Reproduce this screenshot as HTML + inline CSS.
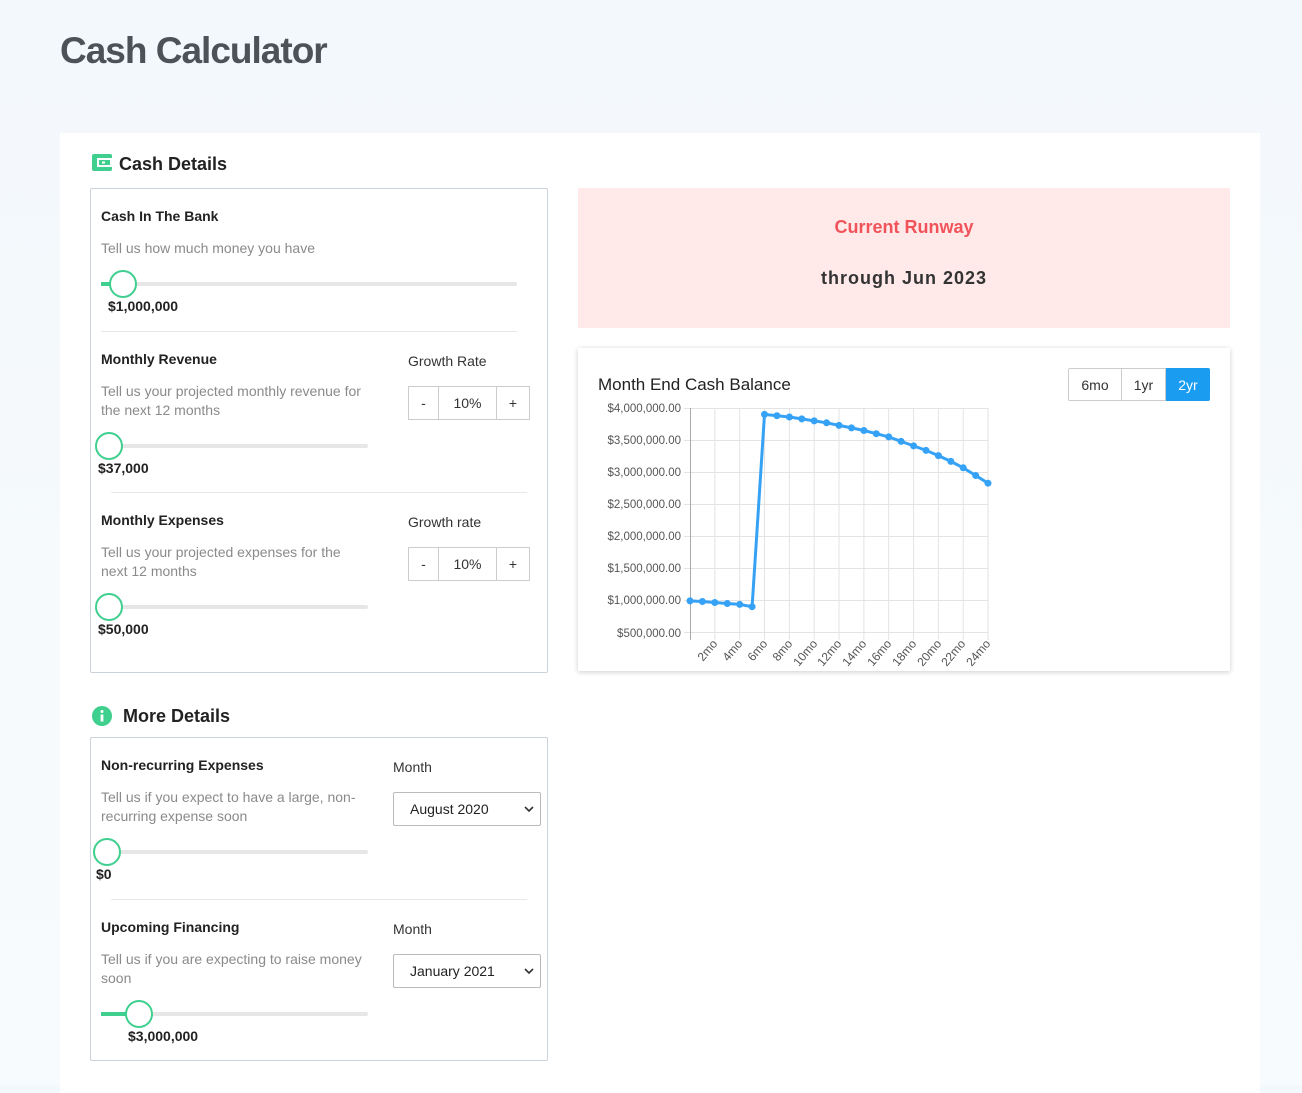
<!DOCTYPE html>
<html><head><meta charset="utf-8"><style>
*{box-sizing:border-box;margin:0;padding:0}
body{width:1302px;height:1085px;background:linear-gradient(180deg,#f3f8fc,#f8fbfd);font-family:"Liberation Sans",Arial,sans-serif;position:relative;overflow:hidden;color:#222}
.a{position:absolute}
h1{position:absolute;left:60px;top:30px;font-size:37px;font-weight:bold;color:#4b5358;letter-spacing:-1px}
.card{left:60px;top:133px;width:1200px;height:960px;background:#fff}
.box{border:1px solid #cbd2da;border-radius:2px;background:#fff}
.lbl{font-size:14px;font-weight:bold;color:#222}
.desc{font-size:14px;color:#8a8a8a;line-height:19px}
.val{font-size:14px;font-weight:bold;color:#222}
.track{height:4px;background:#e6e6e6;border-radius:2px}
.thumb{width:28px;height:28px;border-radius:50%;border:2px solid #3fcf8e;background:#fff}
.fill{height:4px;background:#3fcf8e}
.gr{font-size:14px;color:#333}
.stp{height:34px;display:flex}
.stp div{border:1px solid #ccc;display:flex;align-items:center;justify-content:center;font-size:14px;color:#333;background:#fff}
.sel{border:1px solid #bbb;border-radius:2px;font-size:14px;color:#222;padding:0 0 0 16px;display:flex;align-items:center;background:#fff}
.hr{height:1px;background:#e8e8e8}
</style></head><body>
<h1>Cash Calculator</h1>
<div class="a card"></div>
<svg class="a" style="left:92px;top:154px" width="20" height="17"><rect x="0" y="0" width="20" height="17" rx="2" fill="#3fcf8e"/><rect x="5" y="4" width="15" height="9" fill="#fff"/><rect x="7" y="6" width="11" height="5" fill="#3fcf8e"/><rect x="10" y="7.5" width="3" height="2" fill="#fff"/></svg>
<div class="a" style="left:119px;top:154px;font-size:18px;font-weight:bold;color:#222">Cash Details</div>

<div class="a box" style="left:90px;top:188px;width:458px;height:485px"></div>
<div class="a lbl" style="left:101px;top:208px">Cash In The Bank</div>
<div class="a desc" style="left:101px;top:239px">Tell us how much money you have</div>
<div class="a track" style="left:101px;top:282px;width:416px"></div>
<div class="a fill" style="left:101px;top:282px;width:12px"></div>
<div class="a thumb" style="left:109px;top:270px"></div>
<div class="a val" style="left:108px;top:298px">$1,000,000</div>
<div class="a hr" style="left:101px;top:331px;width:416px"></div>

<div class="a lbl" style="left:101px;top:351px">Monthly Revenue</div>
<div class="a gr" style="left:408px;top:353px">Growth Rate</div>
<div class="a desc" style="left:101px;top:382px">Tell us your projected monthly revenue for<br>the next 12 months</div>
<div class="a stp" style="left:408px;top:386px"><div style="width:31px">-</div><div style="width:59px;margin-left:-1px">10%</div><div style="width:34px;margin-left:-1px">+</div></div>
<div class="a track" style="left:101px;top:444px;width:267px"></div>
<div class="a thumb" style="left:95px;top:432px"></div>
<div class="a val" style="left:98px;top:460px">$37,000</div>
<div class="a hr" style="left:111px;top:492px;width:416px"></div>

<div class="a lbl" style="left:101px;top:512px">Monthly Expenses</div>
<div class="a gr" style="left:408px;top:514px">Growth rate</div>
<div class="a desc" style="left:101px;top:543px">Tell us your projected expenses for the<br>next 12 months</div>
<div class="a stp" style="left:408px;top:547px"><div style="width:31px">-</div><div style="width:59px;margin-left:-1px">10%</div><div style="width:34px;margin-left:-1px">+</div></div>
<div class="a track" style="left:101px;top:605px;width:267px"></div>
<div class="a thumb" style="left:95px;top:593px"></div>
<div class="a val" style="left:98px;top:621px">$50,000</div>

<svg class="a" style="left:92px;top:706px" width="20" height="20"><circle cx="10" cy="10" r="10" fill="#3fcf8e"/><circle cx="10" cy="5.5" r="1.5" fill="#fff"/><rect x="8.6" y="8.5" width="2.8" height="7" fill="#fff"/></svg>
<div class="a" style="left:123px;top:706px;font-size:18px;font-weight:bold;color:#222">More Details</div>

<div class="a box" style="left:90px;top:737px;width:458px;height:324px"></div>
<div class="a lbl" style="left:101px;top:757px">Non-recurring Expenses</div>
<div class="a gr" style="left:393px;top:759px">Month</div>
<div class="a desc" style="left:101px;top:788px">Tell us if you expect to have a large, non-<br>recurring expense soon</div>
<div class="a sel" style="left:393px;top:792px;width:148px;height:34px">August 2020<svg style="position:absolute;right:6px;top:13px" width="10" height="7"><path d="M1 1 L5 5 L9 1" fill="none" stroke="#333" stroke-width="1.6"/></svg></div>
<div class="a track" style="left:101px;top:850px;width:267px"></div>
<div class="a thumb" style="left:93px;top:838px"></div>
<div class="a val" style="left:96px;top:866px">$0</div>
<div class="a hr" style="left:111px;top:899px;width:416px"></div>

<div class="a lbl" style="left:101px;top:919px">Upcoming Financing</div>
<div class="a gr" style="left:393px;top:921px">Month</div>
<div class="a desc" style="left:101px;top:950px">Tell us if you are expecting to raise money<br>soon</div>
<div class="a sel" style="left:393px;top:954px;width:148px;height:34px">January 2021<svg style="position:absolute;right:6px;top:13px" width="10" height="7"><path d="M1 1 L5 5 L9 1" fill="none" stroke="#333" stroke-width="1.6"/></svg></div>
<div class="a track" style="left:101px;top:1012px;width:267px"></div>
<div class="a fill" style="left:101px;top:1012px;width:28px"></div>
<div class="a thumb" style="left:125px;top:1000px"></div>
<div class="a val" style="left:128px;top:1028px">$3,000,000</div>

<div class="a" style="left:578px;top:188px;width:652px;height:140px;background:#ffe9e9"></div>
<div class="a" style="left:578px;top:217px;width:652px;text-align:center;font-size:18px;font-weight:bold;color:#f0545a">Current Runway</div>
<div class="a" style="left:578px;top:268px;width:652px;text-align:center;font-size:18px;font-weight:bold;color:#333;letter-spacing:1px">through Jun 2023</div>

<div class="a" style="left:578px;top:348px;width:652px;height:323px;background:#fff;box-shadow:0 1px 5px rgba(0,0,0,.2)"></div>
<div class="a" style="left:598px;top:375px;font-size:17px;color:#222">Month End Cash Balance</div>
<div class="a" style="left:1068px;top:368px;display:flex;height:33px;font-size:14px">
<div style="width:54px;border:1px solid #ccc;border-radius:2px 0 0 2px;display:flex;align-items:center;justify-content:center;color:#333">6mo</div>
<div style="width:44px;border:1px solid #ccc;border-left:none;display:flex;align-items:center;justify-content:center;color:#333">1yr</div>
<div style="width:44px;background:#1a9cf0;border-radius:0 2px 2px 0;display:flex;align-items:center;justify-content:center;color:#fff">2yr</div>
</div>
<svg class="a" style="left:578px;top:395px" width="440" height="280" viewBox="578 395 440 280">
<g stroke="#e3e3e3" stroke-width="1">
<line x1="684" y1="408.5" x2="988" y2="408.5"/><line x1="684" y1="440.5" x2="988" y2="440.5"/><line x1="684" y1="472.5" x2="988" y2="472.5"/><line x1="684" y1="504.5" x2="988" y2="504.5"/><line x1="684" y1="536.5" x2="988" y2="536.5"/><line x1="684" y1="568.5" x2="988" y2="568.5"/><line x1="684" y1="600.5" x2="988" y2="600.5"/><line x1="684" y1="632.5" x2="988" y2="632.5"/>
<line x1="714.8" y1="408" x2="714.8" y2="640"/><line x1="739.7" y1="408" x2="739.7" y2="640"/><line x1="764.5" y1="408" x2="764.5" y2="640"/><line x1="789.4" y1="408" x2="789.4" y2="640"/><line x1="814.2" y1="408" x2="814.2" y2="640"/><line x1="839" y1="408" x2="839" y2="640"/><line x1="863.9" y1="408" x2="863.9" y2="640"/><line x1="888.7" y1="408" x2="888.7" y2="640"/><line x1="913.6" y1="408" x2="913.6" y2="640"/><line x1="938.4" y1="408" x2="938.4" y2="640"/><line x1="963.2" y1="408" x2="963.2" y2="640"/><line x1="988" y1="408" x2="988" y2="640"/>
</g>
<line x1="690.5" y1="408" x2="690.5" y2="640" stroke="#aaa"/>
<g font-size="11.5" fill="#555" text-anchor="end" font-family="Liberation Sans, Arial, sans-serif">
<text x="681" y="412">$4,000,000.00</text><text x="681" y="444">$3,500,000.00</text><text x="681" y="476">$3,000,000.00</text><text x="681" y="508">$2,500,000.00</text><text x="681" y="540">$2,000,000.00</text><text x="681" y="572">$1,500,000.00</text><text x="681" y="604">$1,000,000.00</text><text x="681" y="637">$500,000.00</text>
</g>
<g font-size="12" fill="#555" text-anchor="end" font-family="Liberation Sans, Arial, sans-serif">
<text transform="translate(718,644) rotate(-50)">2mo</text><text transform="translate(743,644) rotate(-50)">4mo</text><text transform="translate(768,644) rotate(-50)">6mo</text><text transform="translate(793,644) rotate(-50)">8mo</text><text transform="translate(818,644) rotate(-50)">10mo</text><text transform="translate(842,644) rotate(-50)">12mo</text><text transform="translate(867,644) rotate(-50)">14mo</text><text transform="translate(892,644) rotate(-50)">16mo</text><text transform="translate(917,644) rotate(-50)">18mo</text><text transform="translate(942,644) rotate(-50)">20mo</text><text transform="translate(966,644) rotate(-50)">22mo</text><text transform="translate(991,644) rotate(-50)">24mo</text>
</g>
<polyline fill="none" stroke="#36a2f5" stroke-width="3" points="690,600.9 702.4,601.5 714.8,602.5 727.3,603.5 739.7,604.4 752.1,606.7 764.5,414.4 776.9,415.7 789.4,417 801.8,418.9 814.2,420.9 826.6,422.8 839,425.4 851.5,427.9 863.9,430.5 876.3,433.7 888.7,436.9 901.1,441.4 913.6,445.9 926,450.4 938.4,455.6 950.8,461.4 963.2,467.8 975.7,475.5 988,483.2"/>
<g fill="#36a2f5">
<circle cx="690" cy="600.9" r="3.5"/><circle cx="702.4" cy="601.5" r="3.5"/><circle cx="714.8" cy="602.5" r="3.5"/><circle cx="727.3" cy="603.5" r="3.5"/><circle cx="739.7" cy="604.4" r="3.5"/><circle cx="752.1" cy="606.7" r="3.5"/><circle cx="764.5" cy="414.4" r="3.5"/><circle cx="776.9" cy="415.7" r="3.5"/><circle cx="789.4" cy="417" r="3.5"/><circle cx="801.8" cy="418.9" r="3.5"/><circle cx="814.2" cy="420.9" r="3.5"/><circle cx="826.6" cy="422.8" r="3.5"/><circle cx="839" cy="425.4" r="3.5"/><circle cx="851.5" cy="427.9" r="3.5"/><circle cx="863.9" cy="430.5" r="3.5"/><circle cx="876.3" cy="433.7" r="3.5"/><circle cx="888.7" cy="436.9" r="3.5"/><circle cx="901.1" cy="441.4" r="3.5"/><circle cx="913.6" cy="445.9" r="3.5"/><circle cx="926" cy="450.4" r="3.5"/><circle cx="938.4" cy="455.6" r="3.5"/><circle cx="950.8" cy="461.4" r="3.5"/><circle cx="963.2" cy="467.8" r="3.5"/><circle cx="975.7" cy="475.5" r="3.5"/><circle cx="988" cy="483.2" r="3.5"/>
</g>
</svg>
</body></html>
